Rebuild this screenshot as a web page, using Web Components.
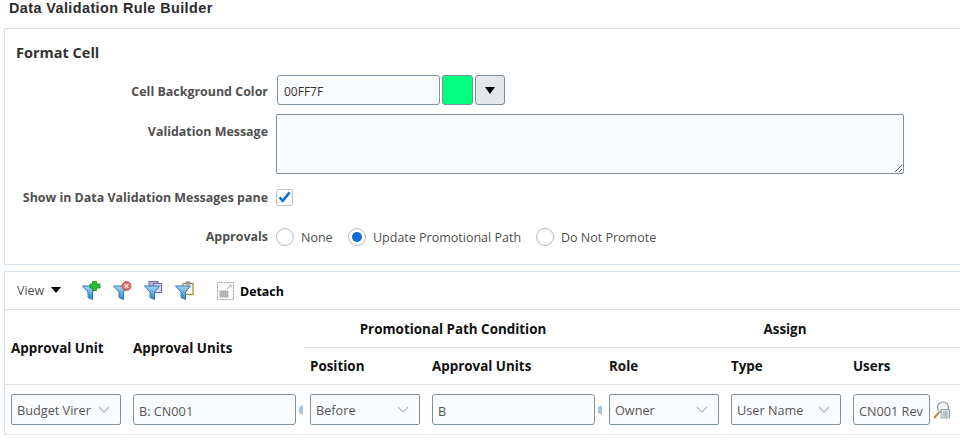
<!DOCTYPE html>
<html>
<head>
<meta charset="utf-8">
<title>Data Validation Rule Builder</title>
<style>
  html, body { margin: 0; height: 100%; overflow: hidden; background: #fff; }
  body { font-family: "Open Sans", "Noto Sans", sans-serif; font-size: 12px; color: #333; }
</style>
</head>
<body>
<rule-builder>
  <span slot="title">Data Validation Rule Builder</span>

  <format-panel slot="format" heading="Format Cell">
    <form-row label="Cell Background Color" nudge="3">
      <color-picker value="00FF7F" color="#00ff7f"></color-picker>
    </form-row>
    <form-row label="Validation Message" top nudge="10">
      <message-box></message-box>
    </form-row>
    <form-row label="Show in Data Validation Messages pane">
      <check-box checked></check-box>
    </form-row>
    <form-row label="Approvals">
      <radio-option style="width:72px">None</radio-option>
      <radio-option style="width:188px" selected>Update Promotional Path</radio-option>
      <radio-option>Do Not Promote</radio-option>
    </form-row>
  </format-panel>

  <rule-table slot="table">
    <table-toolbar slot="toolbar"></table-toolbar>
    <head-cell style="grid-column:1;grid-row:1 / 3" align="middle">Approval Unit</head-cell>
    <head-cell style="grid-column:2;grid-row:1 / 3" align="middle">Approval Units</head-cell>
    <head-cell style="grid-column:3 / 5;grid-row:1" align="center">Promotional Path Condition</head-cell>
    <head-cell style="grid-column:5 / 8;grid-row:1" align="center">Assign</head-cell>
    <head-cell style="grid-column:3;grid-row:2">Position</head-cell>
    <head-cell style="grid-column:4;grid-row:2">Approval Units</head-cell>
    <head-cell style="grid-column:5;grid-row:2">Role</head-cell>
    <head-cell style="grid-column:6;grid-row:2">Type</head-cell>
    <head-cell style="grid-column:7;grid-row:2">Users</head-cell>

    <body-cell><select-box value="Budget Virer"></select-box></body-cell>
    <body-cell><text-box value="B: CN001" width="163"></text-box><tree-nub></tree-nub></body-cell>
    <body-cell><select-box value="Before"></select-box></body-cell>
    <body-cell><text-box value="B" width="163"></text-box><tree-nub></tree-nub></body-cell>
    <body-cell><select-box value="Owner"></select-box></body-cell>
    <body-cell><select-box value="User Name"></select-box></body-cell>
    <body-cell><text-box value="CN001 Rev" width="77"></text-box><search-icon></search-icon></body-cell>
  </rule-table>
</rule-builder>

<script>
// small helper, every element below just sets its shadow markup once
class Base extends HTMLElement {
  render(html) {
    this.attachShadow({ mode: 'open' });
    this.shadowRoot.innerHTML = html;
  }
}

class RuleBuilder extends Base {
  connectedCallback() {
    this.render(`
      <style>
        :host { display: block; width: 968px; padding-left: 4px; box-sizing: border-box; }
        h1 { margin: 0; height: 28px; padding: 0 0 0 5px; font-family: "Liberation Sans", sans-serif; font-size: 14.4px; letter-spacing: .42px; line-height: 17px; font-weight: 700; color: #2b2b2b; box-sizing: border-box; }
        .gap { height: 6px; }
      </style>
      <h1><slot name="title"></slot></h1>
      <slot name="format"></slot>
      <div class="gap"></div>
      <slot name="table"></slot>`);
  }
}

class FormatPanel extends Base {
  connectedCallback() {
    this.render(`
      <style>
        :host { display: block; height: 237px; border: 1px solid #d6dfe6; border-right: 0; box-sizing: border-box; padding: 15px 0 0 0; }
        h2 { margin: 0 0 13px 11px; font-size: 14.5px; line-height: 18px; font-weight: 700; color: #333; }
        .rows { display: grid; row-gap: 9px; grid-template-rows: 30px 60px 30px 30px; }
      </style>
      <h2>${this.getAttribute('heading')}</h2>
      <div class="rows"><slot></slot></div>`);
  }
}

class FormRow extends Base {
  connectedCallback() {
    const top = this.hasAttribute('top');
    const nudge = this.getAttribute('nudge') || 0;
    this.render(`
      <style>
        :host { display: grid; grid-template-columns: 263px 1fr; column-gap: 8px; align-items: ${top ? 'start' : 'center'}; }
        label { text-align: right; font-weight: 700; color: #4f4f4f; font-size: 12.45px; line-height: 16px; white-space: nowrap; padding-top: ${nudge}px; }
        .ctl { display: flex; align-items: center; }
      </style>
      <label>${this.getAttribute('label')}</label>
      <div class="ctl"><slot></slot></div>`);
  }
}

class ColorPicker extends Base {
  connectedCallback() {
    this.render(`
      <style>
        :host { display: flex; gap: 2px; height: 30px; margin-left: 1px; }
        .val { width: 163px; box-sizing: border-box; border: 1px solid #7d919d; border-radius: 3px; background: #fbfcfe; padding-left: 6px; line-height: 31px; font-size: 12px; color: #333; }
        .sw { width: 31px; box-sizing: border-box; border: 1px solid #7d919d; border-radius: 3px; background: ${this.getAttribute('color')}; }
        button { width: 30px; padding: 0; margin: 0; box-sizing: border-box; border: 1px solid #7d919d; border-radius: 3px; background: #e4e8ea; display: flex; align-items: center; justify-content: center; }
        i { width: 0; height: 0; border-left: 5.5px solid transparent; border-right: 5.5px solid transparent; border-top: 7px solid #000; }
      </style>
      <div class="val">${this.getAttribute('value')}</div>
      <div class="sw"></div>
      <button><i></i></button>`);
  }
}

class MessageBox extends Base {
  connectedCallback() {
    this.render(`
      <style>
        :host { display: block; }
        textarea { display: block; width: 628px; height: 60px; box-sizing: border-box; margin: 0; border: 1px solid #7d919d; border-radius: 2px; background: #fbfcfe; outline: 0; }
      </style>
      <textarea></textarea>`);
  }
}

class CheckBox extends Base {
  connectedCallback() {
    this.render(`
      <style>
        :host { display: block; width: 17px; height: 17px; margin-top: -2px; box-sizing: border-box; border: 1px solid #b8c4cc; border-radius: 2px; background: #fff; }
        svg { display: block; }
      </style>
      <svg width="15" height="15" viewBox="0 0 15 15"><path d="M2.6 7.4 L5.8 10.8 L12.6 2.4" fill="none" stroke="#0a6fd1" stroke-width="2.6"/></svg>`);
  }
}

class RadioOption extends Base {
  connectedCallback() {
    const dot = this.hasAttribute('selected') ? '<b></b>' : '';
    this.render(`
      <style>
        :host { display: flex; align-items: center; gap: 7px; color: #4f4f4f; font-size: 12.5px; white-space: nowrap; }
        .o { width: 18px; height: 18px; box-sizing: border-box; border: 1px solid #b0bcc5; border-radius: 50%; background: #fff; display: flex; align-items: center; justify-content: center; }
        b { width: 10px; height: 10px; border-radius: 50%; background: #0a6fd1; }
      </style>
      <span class="o">${dot}</span><slot></slot>`);
  }
}

class RuleTable extends Base {
  connectedCallback() {
    this.render(`
      <style>
        :host { display: block; border: 1px solid #d6dfe6; border-width: 1px 0 0 1px; }
        .grid { display: grid; grid-template-columns: 122px 177px 122px 177px 122px 122px 1fr; grid-template-rows: 38px 37px 50px; }
      </style>
      <slot name="toolbar"></slot>
      <div class="grid"><slot></slot></div>`);
  }
}

class TableToolbar extends Base {
  connectedCallback() {
    const funnel = `<defs><linearGradient id="f" x1="0" y1="0" x2="0" y2="1"><stop offset="0" stop-color="#a5d4f0"/><stop offset="1" stop-color="#2f86c8"/></linearGradient></defs><path d="M.5 5 H15.500 L10.500 11 V18.500 L6 16.500 V11 Z" fill="url(#f)" stroke="#2f78b2" stroke-width="1"/>`;
    this.render(`
      <style>
        :host { display: flex; align-items: center; height: 37px; border-bottom: 1px solid #d6dfe6; padding-left: 12px; box-sizing: content-box; }
        .view { font-size: 12.4px; color: #4f4f4f; width: 34px; }
        .arr { width: 0; height: 0; border-left: 5px solid transparent; border-right: 5px solid transparent; border-top: 6px solid #000; margin-right: 21px; margin-top: -2px; }
        svg { display: block; flex: none; }
        .icons { display: flex; gap: 12px; margin-right: 23px; }
        .det { display: flex; align-items: center; gap: 6px; font-weight: 700; font-size: 12.4px; color: #000; }
        .det span { padding-top: 2px; }
      </style>
      <span class="view">View</span><span class="arr"></span>
      <div class="icons">
        <svg width="19" height="19" viewBox="0 0 19 19">${funnel}<path d="M10.500 .5 H14.500 V3 H18 V7 H14.500 V9.500 H10.500 V7 H8 V3 H10.500 Z" fill="#21c12e" stroke="#128a1d" stroke-width=".8"/></svg>
        <svg width="19" height="19" viewBox="0 0 19 19">${funnel}<circle cx="13.500" cy="5" r="4.500" fill="#d9706c" stroke="#b84c4a" stroke-width=".8"/><path d="M11.700 3.200 L15.300 6.800 M15.300 3.200 L11.700 6.800" stroke="#f9e4e4" stroke-width="1.300"/></svg>
        <svg width="19" height="19" viewBox="0 0 19 19"><rect x="5" y=".5" width="9" height="8" fill="#b8b6dc" stroke="#6a66a4"/><rect x="9.500" y="2.500" width="8" height="9" fill="#d5d4ec" stroke="#6a66a4"/>${funnel}</svg>
        <svg width="19" height="19" viewBox="0 0 19 19"><rect x="8" y="2.500" width="10" height="11" fill="#fbf7ea" stroke="#a8883a" stroke-width="1.200"/><rect x="10.500" y=".5" width="5" height="3" fill="#8f8f8f"/>${funnel}</svg>
      </div>
      <span class="det">
        <svg width="17" height="18" viewBox="0 0 17 18"><rect x=".5" y=".5" width="16" height="17" fill="#fbfbfb" stroke="#a0a0a0" stroke-dasharray="2 1"/><rect x="3" y="9" width="8" height="6" fill="#d0d0d0" stroke="#8a8a8a" stroke-width=".6"/><path d="M3 11 H11 M3 13 H11 M6 9 V15 M8.500 9 V15" stroke="#8a8a8a" stroke-width=".5"/><path d="M10 7 L14 3 M11.500 3 H14 V5.500" fill="none" stroke="#b0b0b0"/></svg>
        <span>Detach</span>
      </span>`);
  }
}

class HeadCell extends Base {
  connectedCallback() {
    const align = this.getAttribute('align');
    const center = align === 'center';
    const pad = center ? 1 : (align === 'middle' ? 2 : 0);
    this.render(`
      <style>
        :host { display: flex; align-items: center; justify-content: ${center ? 'center' : 'flex-start'}; padding: ${pad}px 0 0 ${center ? 0 : 6}px; border-bottom: 1px solid #d6dfe6; border-right: 1px solid #fff; box-sizing: border-box; font-weight: 700; font-size: 13.4px; color: #111; white-space: nowrap; }
      </style>
      <slot></slot>`);
  }
}

class BodyCell extends Base {
  connectedCallback() {
    this.render(`
      <style>
        :host { display: flex; align-items: center; padding-left: 6px; border-bottom: 1px solid #e6ebef; border-right: 1px solid #fff; box-sizing: border-box; overflow: hidden; }
      </style>
      <slot></slot>`);
  }
}

class SelectBox extends Base {
  connectedCallback() {
    this.render(`
      <style>
        :host { display: flex; align-items: center; width: 110px; height: 31px; box-sizing: border-box; border: 1px solid #7d919d; border-radius: 2px; background: #fbfcfe; padding-left: 5px; font-size: 12.7px; color: #555; flex: none; }
        span { width: 75px; white-space: nowrap; padding-top: 1px; }
        svg { margin-left: 6px; display: block; }
      </style>
      <span>${this.getAttribute('value')}</span>
      <svg width="12" height="7" viewBox="0 0 12 7"><path d="M1 1 L6 6 L11 1" fill="none" stroke="#b0bac0" stroke-width="1.200"/></svg>`);
  }
}

class TextBox extends Base {
  connectedCallback() {
    this.render(`
      <style>
        :host { display: block; flex: none; width: ${this.getAttribute('width')}px; height: 31px; box-sizing: border-box; border: 1px solid #7d919d; border-radius: 3px; background: #fbfcfe; padding-left: 5px; font-size: 12.7px; line-height: 32px; color: #555; overflow: hidden; white-space: nowrap; }
      </style>
      ${this.getAttribute('value')}`);
  }
}

class TreeNub extends Base {
  connectedCallback() {
    this.render(`
      <style>:host { display: block; flex: none; margin-left: 2px; } svg { display: block; }</style>
      <svg width="6" height="12" viewBox="0 0 6 12"><path d="M5.500 1 V11 L1 9 V3 Z" fill="#a9c3d8"/></svg>`);
  }
}

class SearchIcon extends Base {
  connectedCallback() {
    this.render(`
      <style>:host { display: block; flex: none; margin-left: 3px; } svg { display: block; }</style>
      <svg width="18" height="18" viewBox="0 0 18 18">
        <path d="M1 17 L6 11.500" stroke="#c08a3e" stroke-width="2.200"/>
        <circle cx="10" cy="6.500" r="5.500" fill="#f3f6f8" stroke="#8a9aa5" stroke-width="1.200"/>
        <rect x="8" y="8.500" width="8.500" height="8.500" fill="#e2e9ee" stroke="#7f929f" stroke-width=".8"/>
        <path d="M10 11 H15 M10 13 H15 M10 15 H15" stroke="#6f8494" stroke-width=".8"/>
      </svg>`);
  }
}

customElements.define('rule-builder', RuleBuilder);
customElements.define('format-panel', FormatPanel);
customElements.define('form-row', FormRow);
customElements.define('color-picker', ColorPicker);
customElements.define('message-box', MessageBox);
customElements.define('check-box', CheckBox);
customElements.define('radio-option', RadioOption);
customElements.define('rule-table', RuleTable);
customElements.define('table-toolbar', TableToolbar);
customElements.define('head-cell', HeadCell);
customElements.define('body-cell', BodyCell);
customElements.define('select-box', SelectBox);
customElements.define('text-box', TextBox);
customElements.define('tree-nub', TreeNub);
customElements.define('search-icon', SearchIcon);
</script>
</body>
</html>
